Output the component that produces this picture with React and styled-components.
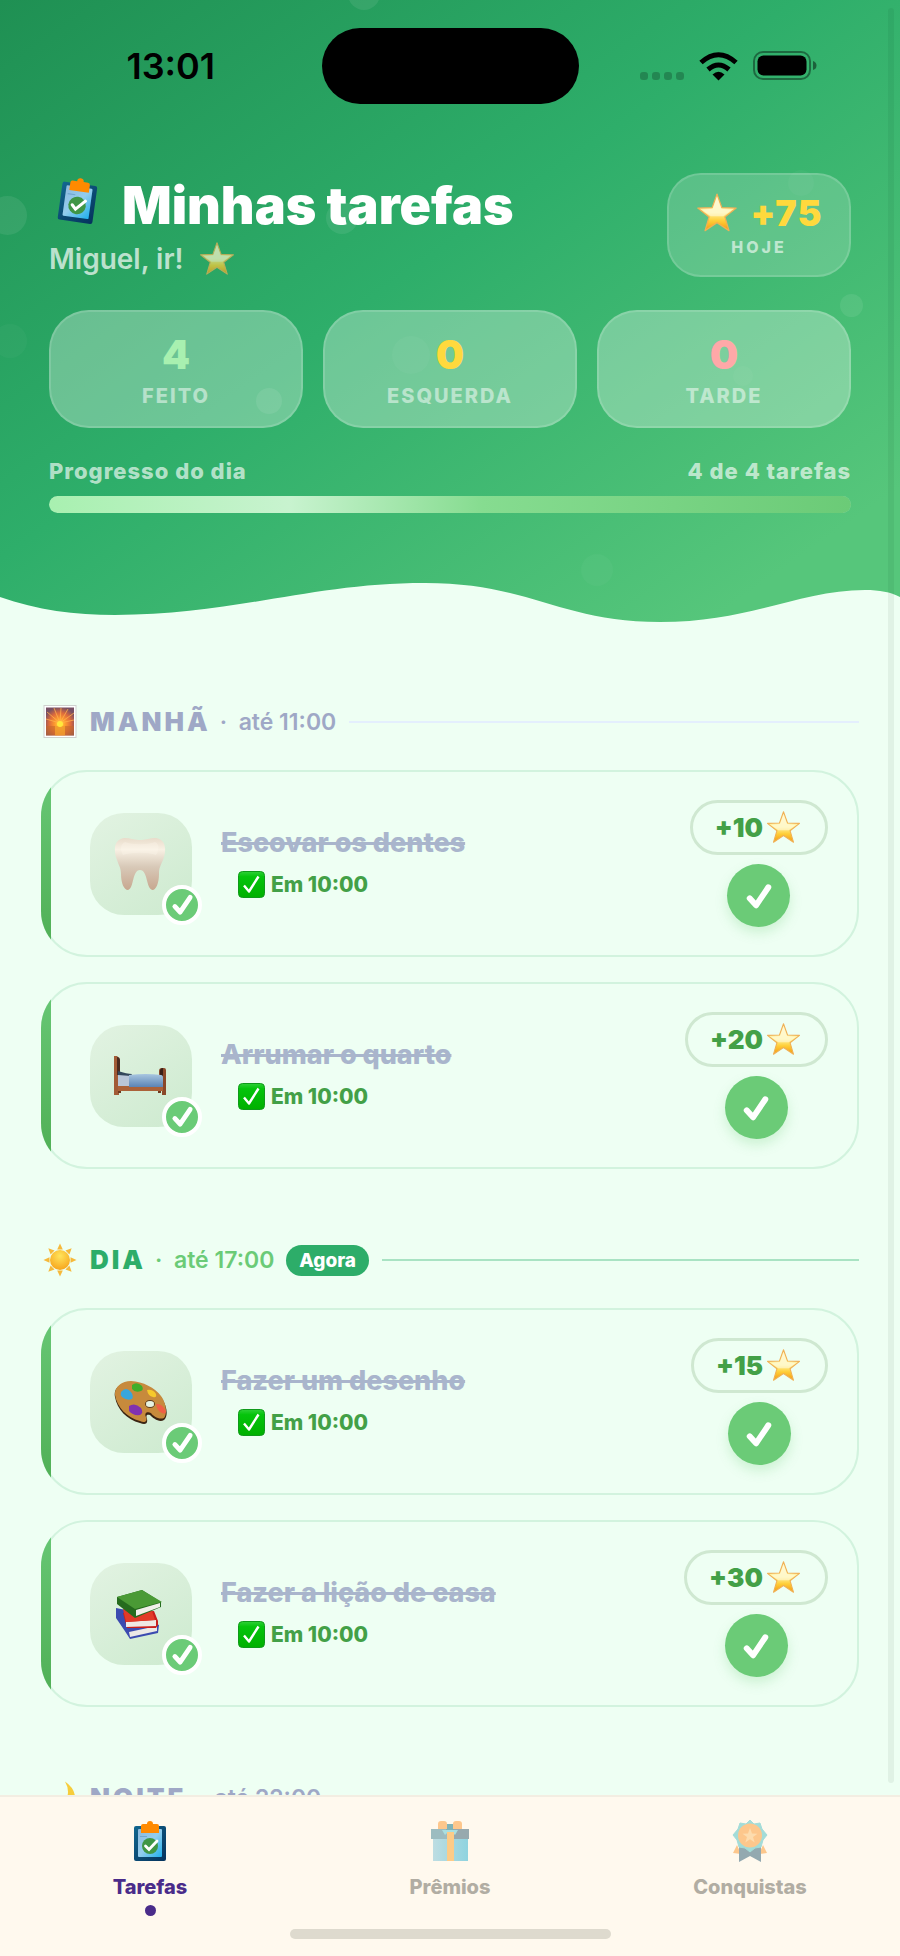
import React from "react";
import styled, { createGlobalStyle, css } from "styled-components";

const Colors = {
  page:      "#eefff3",
  green:     "#2dad69",
  leaf:      "#6bcb77",
  darkLeaf:  "#43a047",
  muted:     "#9fa8c6",
  done:      "#a9b5cc",
  cream:     "#fff9ee",
  purple:    "#4a2c8a",
  yellow:    "#ffd93d",
  mint:      "#a8f0b0",
  pink:      "#ffa8a8"
};

const GlobalStyle = createGlobalStyle`
  * { box-sizing: border-box; }
  body {
    margin: 0;
    background: ${Colors.page};
    font-family: Inter, "Liberation Sans", sans-serif;
  }
  button {
    border: 0;
    padding: 0;
    background: none;
    font: inherit;
    cursor: pointer;
  }
  svg { display: block; flex: none; }
`;

/* ---------- icons ---------- */

const StarIcon = ({ size, opacity = 1 }) =>
  <svg width={size} height={size} viewBox="0 0 40 40" opacity={opacity} aria-hidden="true">
    <defs>
      <linearGradient id="starFill" x1="0" y1="0" x2="0" y2="1">
        <stop offset="0" stopColor="#fff3bd" />
        <stop offset="0.5" stopColor="#fff3a0" />
        <stop offset="0.72" stopColor="#ffcf3a" />
        <stop offset="1" stopColor="#f59a0c" />
      </linearGradient>
    </defs>
    <path
      d="M20 2 L24.600 14.900 L38.300 15.300 L27.500 23.700 L31.400 36.800 L20 29.200 L8.600 36.800 L12.500 23.700 L1.700 15.300 L15.400 14.900 Z"
      fill="url(#starFill)" stroke="#f0b055" strokeWidth="1.2" strokeLinejoin="round" />
    <path d="M20 5 L24 16 L34 17 L26 23 L14 23 L6 17 L16 16 Z" fill="#fffdf0" opacity="0.5" />
  </svg>

const CheckIcon = ({ size, width = 4 }) =>
  <svg width={size} height={size} viewBox="0 0 24 24" aria-hidden="true">
    <path d="M4 14 L9.500 20 L20 4.500" fill="none" stroke="#fff"
      strokeWidth={width} strokeLinecap="round" strokeLinejoin="round" />
  </svg>

const ClipboardIcon = ({ size }) =>
  <svg width={size} height={size} viewBox="0 0 42 42" aria-hidden="true">
    <defs>
      <linearGradient id="board" x1="0" y1="0" x2="1" y2="1">
        <stop offset="0" stopColor="#12678f" />
        <stop offset="1" stopColor="#05325c" />
      </linearGradient>
      <linearGradient id="sheet" x1="0" y1="0" x2="1" y2="1">
        <stop offset="0" stopColor="#8fb9dd" />
        <stop offset="0.5" stopColor="#92cdee" />
        <stop offset="1" stopColor="#1eb0ec" />
      </linearGradient>
    </defs>
    <rect x="5" y="6" width="32" height="35" rx="2" fill="url(#board)" />
    <rect x="9" y="9" width="24" height="28" rx="1" fill="url(#sheet)" />
    <path d="M11 16.500 H18" stroke="#6fa6cf" strokeWidth="1" />
    <path d="M12 13 V6 Q12 4 14 4 H18 Q18 1 21 1 Q24 1 24 4 H28 Q30 4 30 6 V13 Z" fill="#ff8a00" />
    <circle cx="21" cy="26" r="8" fill="#3f9646" />
    <path d="M16.500 26 L20 29.500 L28 21" fill="none" stroke="#fff" strokeWidth="2.800" strokeLinecap="round" />
  </svg>

const SunriseIcon = () =>
  <svg width="34" height="34" viewBox="0 0 34 34" aria-hidden="true">
    <defs>
      <radialGradient id="dawn" cx="0.5" cy="0.58" r="0.6">
        <stop offset="0" stopColor="#ffe14a" />
        <stop offset="0.3" stopColor="#ff9d2e" />
        <stop offset="0.65" stopColor="#dd6a3c" />
        <stop offset="1" stopColor="#775063" />
      </radialGradient>
    </defs>
    <rect x="1" y="0.5" width="32" height="32" fill="#fff" stroke="#cfd2cf" />
    <rect x="3" y="2.500" width="28" height="28" fill="url(#dawn)" />
    <path d="M3 21 H31 V30.500 H3 Z" fill="#c8692a" opacity="0.6" />
    <path d="M12 21 H22 V30.500 H12 Z" fill="#ffb02e" opacity="0.6" />
    <path d="M17 18 L4 7 M17 18 L11 3 M17 18 L18 3 M17 18 L25 4 M17 18 L31 8 M17 18 L3 14 M17 18 L31 15"
      stroke="#ffb04a" strokeWidth="0.800" />
    <circle cx="17" cy="19" r="3" fill="#ffe83d" />
  </svg>

const SunIcon = () =>
  <svg width="34" height="34" viewBox="0 0 34 34" aria-hidden="true">
    <defs>
      <radialGradient id="sun" cx="0.5" cy="0.3" r="0.7">
        <stop offset="0" stopColor="#ffe45c" />
        <stop offset="1" stopColor="#f7a51c" />
      </radialGradient>
    </defs>
    {[0, 45, 90, 135, 180, 225, 270, 315].map(a =>
      <path key={a} d="M17 0.500 L19.800 6.500 H14.200 Z" fill="#f6b93b" transform={`rotate(${a} 17 17)`} />
    )}
    <circle cx="17" cy="17" r="10" fill="url(#sun)" />
  </svg>

const MoonIcon = () =>
  <svg width="34" height="34" viewBox="0 0 34 34" aria-hidden="true">
    <path d="M22 0.500 Q33 8 32 19 Q29 33 14 33 Q5 32 2 25 Q14 29 22 20 Q28 11 22 0.500 Z" fill="#f6cd3c" />
  </svg>

const TickBoxIcon = () =>
  <svg width="27" height="27" viewBox="0 0 27 27" aria-hidden="true">
    <defs>
      <linearGradient id="tickBox" x1="0" y1="0" x2="0" y2="1">
        <stop offset="0" stopColor="#2fd038" />
        <stop offset="0.2" stopColor="#05c40c" />
        <stop offset="1" stopColor="#00b000" />
      </linearGradient>
    </defs>
    <rect x="0.500" y="0.500" width="26" height="26" rx="4" fill="url(#tickBox)" stroke="#0f9a1a" />
    <path d="M6 14.500 L11 20.500 L20.500 5.500" fill="none" stroke="#fff" strokeWidth="2.400" strokeLinejoin="round" />
  </svg>

const ToothIcon = () =>
  <svg width="52" height="54" viewBox="1 0 52 54" aria-hidden="true">
    <defs>
      <linearGradient id="tooth" x1="0" y1="0" x2="0" y2="1">
        <stop offset="0" stopColor="#e9dccb" />
        <stop offset="0.22" stopColor="#f8f1e4" />
        <stop offset="0.55" stopColor="#d8c9b8" />
        <stop offset="1" stopColor="#c7a78f" />
      </linearGradient>
    </defs>
    <path
      d="M9 1.500 C16 0 20 3.500 27 3 C34 3.500 38 0 45 1.500 C54 4 53 16 50 23 C47 30 46 31 46 37 C46 46 43 53 39.500 53 C33 52 35 33 27 33 C19 33 21 52 15 53 C11 53 8 46 8 37 C8 31 6 29 4 23 C1 16 0 4 9 1.500 Z"
      fill="url(#tooth)" />
    <path d="M12 5 C20 8 34 8 42 5 C47 7 46 14 43 18 C34 15 20 15 10 18 C7 13 7 7 12 5 Z" fill="#fffaf0" opacity="0.3" />
  </svg>

const BedIcon = () =>
  <svg width="54" height="54" viewBox="0 0 54 54" aria-hidden="true">
    <defs>
      <linearGradient id="blanket" x1="0" y1="0" x2="0" y2="1">
        <stop offset="0" stopColor="#a8c6e0" />
        <stop offset="1" stopColor="#5b84b5" />
      </linearGradient>
    </defs>
    <path d="M1 7 L4 7 Q6 8 6 11 V46 H1 Z" fill="#a25b36" />
    <path d="M4 8 Q7 8 7 11 V26 L4 26 Z" fill="#4b2a1f" />
    <path d="M46 22 Q46 19 49 19 H51 Q53 19 53 21 V46 H49 V26 H46 Z" fill="#8a4829" />
    <path d="M47 22 Q47 19 50 19 V27 H47 Z" fill="#3a2018" />
    <rect x="5" y="36" width="45" height="6" fill="#ab6239" />
    <path d="M5 26 L18 26 L18 37 L5 37 Z" fill="#b9c6d8" />
    <path d="M5 22 Q14 25 19 25 L18 27 L5 26 Z" fill="#34485c" />
    <path d="M16 26 Q33 24 48 26 Q50 26 50 29 V38 H16 Z" fill="url(#blanket)" />
    <path d="M5 42 H8 V44 H5 Z M45 42 H48 V44 H45 Z" fill="#6d3a20" />
  </svg>

const PaletteIcon = () =>
  <svg width="54" height="54" viewBox="0 -2 54 54" aria-hidden="true">
    <path
      d="M2 20 C0 11 8 5 18 5.500 C30 6 42 12 48 20 C55 30 55 40 51 43 C46 46 40 41 37 38 C33 37 33 39 34 42 C35 47 32 48 27 46 C14 43 4 32 2 20 Z"
      fill="#3b2413" />
    <path
      d="M2 18 C1 10 9 4 18 4 C30 4.500 42 11 48 19 C54 27 54 38 51 41 C46 43 40 39 38 36 C34 34 31 36 33 40 C35 45 31 46 27 44 C14 41 4 30 2 18 Z"
      fill="#c78a3c" />
    <ellipse cx="37" cy="27" rx="4.500" ry="3.500" fill="#e6f2e2" stroke="#5e3a18" strokeWidth="1" />
    <path d="M8 15 Q13 9 18 15 Q21 19 19 22 Q14 24 9 20 Q7 18 8 15 Z" fill="#3aa6dc" />
    <path d="M19 8 Q24 4 29 9 Q31 13 28 14 Q22 16 19 12 Z" fill="#3fae2a" />
    <path d="M34 13 Q40 12 43 17 Q44 21 40 20 Q35 19 34 13 Z" fill="#f6c92c" />
    <path d="M43 27 Q49 26 53 34 Q53 38 49 36 Q44 34 43 27 Z" fill="#ef5f45" />
    <path d="M16 29 Q22 25 28 31 Q31 36 27 38 Q20 39 16 34 Z" fill="#8131b0" />
  </svg>

const BooksIcon = () =>
  <svg width="54" height="54" viewBox="1 0 54 54" aria-hidden="true">
    <path d="M4 21 L14 23 L47 38 L46 46 L18 52 Q13 44 4 31 Z" fill="#3b4bb0" />
    <path d="M17 45 L45 39 V44 L18 50 Z" fill="#ece9e6" />
    <path d="M11 26 L42 24 L46 34 L46 38 L44 41 L15 41 Z" fill="#c81f1d" />
    <path d="M14 35 L44 33 V39 L14 40 Z" fill="#efe9e4" />
    <path d="M11 22 L40 24 L43 33 L14 35 Z" fill="#e23a28" />
    <path d="M5 10 L30 3 L49 15 L49 20 L23 31 L5 17 Z" fill="#256b1e" />
    <path d="M24 23 L48 16 V20 L24 29 Z" fill="#f2f0ea" />
    <path d="M5 10 L30 3 L50 15 L23 22 Z" fill="#4a9a35" />
  </svg>

const GiftIcon = () =>
  <svg width="42" height="42" viewBox="0 0 42 42" aria-hidden="true">
    <defs>
      <linearGradient id="gift" x1="0" y1="0" x2="1" y2="0">
        <stop offset="0" stopColor="#bedde2" />
        <stop offset="1" stopColor="#8fd3df" />
      </linearGradient>
    </defs>
    <rect x="4" y="19" width="35" height="22" fill="url(#gift)" />
    <rect x="2" y="9" width="38" height="10" fill="#97a9ae" />
    <rect x="2" y="9" width="19" height="10" fill="#9cbcc0" />
    <rect x="17" y="4" width="8" height="7" fill="#7fb3b8" />
    <path d="M9 9 V4 Q9 1 12 1 H15 Q18 1 18 4 V9 Z M33 9 V4 Q33 1 30 1 H27 Q24 1 24 4 V9 Z" fill="#fdc78c" />
    <path d="M13 10 H29 L26 15 L23 12 H19 L16 15 Z" fill="#a9dfe0" />
    <rect x="18" y="12" width="7" height="29" fill="#fdcb87" />
  </svg>

const MedalIcon = () =>
  <svg width="42" height="42" viewBox="0 0 42 42" aria-hidden="true">
    <path d="M8 25 L4 33 L12 34 Z M34 25 L38 33 L30 34 Z" fill="#fdc78c" />
    <path d="M10 27 H32 V42 L21 36 L10 42 Z" fill="#93a9b0" />
    <path
      d="M21 0 L25 4 L31 3 L33 9 L38 15 L34 20 L32 27 L26 28 L21 32 L16 28 L10 27 L8 20 L4 15 L9 9 L11 3 L17 4 Z"
      fill="#a3dcd8" stroke="#a3dcd8" strokeWidth="1" strokeLinejoin="round" />
    <circle cx="21" cy="15.500" r="12" fill="#fdc78c" />
    <path d="M21 8 L23 13.500 L28.500 13.700 L24 17 L25.700 22.500 L21 19.300 L16.300 22.500 L18 17 L13.500 13.700 L19 13.500 Z" fill="#fddcae" />
  </svg>

const WifiIcon = () =>
  <svg width="39" height="29" viewBox="0 0 39 29" aria-hidden="true">
    <path d="M19.500 28.500 L13.500 22.500 Q19.500 17 25.500 22.500 Z" fill="#000" />
    <path d="M9 17.500 Q19.500 8.500 30 17.500" fill="none" stroke="#000" strokeWidth="5" />
    <path d="M2 10.500 Q19.500 -5 37 10.500" fill="none" stroke="#000" strokeWidth="5" />
  </svg>

const BatteryIcon = () =>
  <svg width="64" height="30" viewBox="0 0 64 30" aria-hidden="true">
    <rect x="1" y="1" width="56" height="27" rx="9" fill="none" stroke="#000" strokeWidth="2" opacity="0.4" />
    <rect x="4.500" y="4.500" width="49" height="20" rx="6" fill="#000" />
    <path d="M60 10 Q63.500 11 63.500 14.500 Q63.500 18 60 19 Z" fill="#000" opacity="0.45" />
  </svg>

/* ---------- header ---------- */

const Screen = styled.div`
  position: relative;
  display: flex;
  flex-direction: column;
  height: 100vh;
  overflow: hidden;
`;

const ScrollArea = styled.div`
  flex: 1;
  min-height: 0;
  overflow: hidden;
`;

const ScrollThumb = styled.div`
  position: absolute;
  top: 8px;
  right: 6px;
  bottom: 173px;
  width: 6px;
  border-radius: 3px;
  background: rgba(0, 40, 20, 0.06);
`;

const Header = styled.header`
  position: relative;
  overflow: hidden;
  background: linear-gradient(145deg, #1f9053 0%, #2eae6a 44%, #56c67b 88%, #56c67b 100%);
`;

const Bubble = styled.span`
  position: absolute;
  left: ${p => p.$x}%;
  top: ${p => p.$y}px;
  width: ${p => p.$size}px;
  height: ${p => p.$size}px;
  border-radius: 50%;
  background: rgba(255, 255, 255, ${p => p.$faint ? 0.03 : 0.08});
`;

const StatusBar = styled.div`
  display: grid;
  grid-template-columns: 1fr 257px 1fr;
  align-items: center;
  padding: 28px 0;
`;

const Clock = styled.time`
  padding-left: 20px;
  text-align: center;
  font-size: 36px;
  line-height: 40px;
  font-weight: 600;
  color: #000;
`;

const Island = styled.div`
  height: 76px;
  border-radius: 38px;
  background: #000;
`;

const Signals = styled.div`
  display: flex;
  justify-content: center;
  align-items: flex-end;
  gap: 15px;
  padding-right: 22px;
`;

const SignalDots = styled.div`
  display: flex;
  gap: 4px;
  padding-bottom: 1px;
`;

const SignalDot = styled.i`
  width: 8px;
  height: 8px;
  border-radius: 3px;
  background: rgba(0, 0, 0, 0.22);
`;

const HeaderBody = styled.div`
  position: relative;
  padding: 41px 49px 67px;
`;

const HeadRow = styled.div`
  display: flex;
  justify-content: space-between;
  align-items: flex-start;
`;

const TitleRow = styled.div`
  display: flex;
  align-items: center;
  gap: 22px;
  height: 66px;
  padding-left: 5px;
`;

const Tilted = styled.span`
  transform: rotate(8deg);
  padding-bottom: 12px;
`;

const Title = styled.h1`
  margin: 0;
  font-size: 52px;
  line-height: 64px;
  font-weight: 900;
  color: #fff;
`;

const Greeting = styled.p`
  display: flex;
  align-items: center;
  gap: 15px;
  margin: 2px 0 0;
  font-size: 28px;
  line-height: 36px;
  font-weight: 600;
  color: rgba(255, 255, 255, 0.7);
`;

const glass = css`
  border: 2px solid rgba(255, 255, 255, 0.14);
  text-align: center;
`;

const TodayBadge = styled.div`
  ${glass}
  width: 184px;
  height: 104px;
  padding: 16px 0 0;
  border-radius: 34px;
  background: rgba(255, 255, 255, 0.18);
`;

const TodayPoints = styled.div`
  display: flex;
  justify-content: center;
  align-items: center;
  gap: 13px;
  font-size: 36px;
  line-height: 44px;
  font-weight: 900;
  letter-spacing: 1px;
  color: ${Colors.yellow};
`;

const TodayLabel = styled.div`
  font-size: 16px;
  line-height: 24px;
  font-weight: 800;
  letter-spacing: 3px;
  color: rgba(255, 255, 255, 0.6);
`;

const Stats = styled.div`
  display: grid;
  grid-template-columns: repeat(3, 1fr);
  gap: 20px;
  margin-top: 33px;
`;

const Stat = styled.div`
  ${glass}
  padding: 21px 0 18px;
  border-radius: 40px;
  background: rgba(255, 255, 255, 0.3);
`;

const StatValue = styled.div`
  font-size: 40px;
  line-height: 44px;
  font-weight: 900;
  color: ${p => p.$color};
`;

const StatLabel = styled.div`
  margin-top: 7px;
  font-size: 20px;
  line-height: 24px;
  font-weight: 800;
  letter-spacing: 2px;
  color: rgba(255, 255, 255, 0.5);
`;

const ProgressText = styled.div`
  display: flex;
  justify-content: space-between;
  margin-top: 29px;
  font-size: 22px;
  line-height: 28px;
  font-weight: 800;
  letter-spacing: 1px;
  color: rgba(255, 255, 255, 0.65);
`;

const Track = styled.div`
  height: 17px;
  margin-top: 11px;
  border-radius: 9px;
  background: rgba(255, 255, 255, 0.25);
  overflow: hidden;
`;

const TrackFill = styled.div`
  height: 100%;
  border-radius: 9px;
  background: linear-gradient(90deg, #a8f0b0 0%, #c8f3cf 30%, #86dc90 54%, #6bcb77 100%);
`;

const Wave = styled.svg`
  position: relative;
  width: 100%;
  height: 60px;
`;

/* ---------- tasks ---------- */

const Main = styled.main`
  display: flex;
  flex-direction: column;
  gap: 71px;
  padding: 62px 41px 80px;
`;

const SectionHead = styled.div`
  display: flex;
  align-items: center;
  height: 40px;
  margin-bottom: 28px;
  padding-left: 2px;
  color: ${p => p.$active ? Colors.leaf : Colors.muted};
`;

const SectionName = styled.h2`
  margin: 0 0 0 13px;
  font-size: 26px;
  line-height: 32px;
  font-weight: 900;
  letter-spacing: 3px;
  color: ${p => p.$active ? Colors.green : Colors.muted};
`;

const SectionTime = styled.span`
  margin-left: 9px;
  font-size: 23px;
  line-height: 32px;
  font-weight: 600;
  white-space: pre;
`;

const NowTag = styled.span`
  margin-left: 12px;
  padding: 0 13px;
  border-radius: 16px;
  background: ${Colors.green};
  color: #fff;
  font-size: 19px;
  line-height: 31px;
  font-weight: 800;
`;

const Rule = styled.span`
  flex: 1;
  height: 2px;
  margin-left: 13px;
  background: ${p => p.$active ? "#a9e3c3" : "#e4effd"};
`;

const TaskList = styled.div`
  display: flex;
  flex-direction: column;
  gap: 25px;
`;

const Card = styled.article`
  position: relative;
  display: flex;
  align-items: center;
  height: 187px;
  padding: 0 29px 0 47px;
  border: 2px solid #d2f3de;
  border-radius: 46px;

  &::before {
    content: "";
    position: absolute;
    inset: -2px;
    border-radius: 46px;
    background: linear-gradient(180deg, #68c876, #4fae54) left / 10px 100% no-repeat;
    pointer-events: none;
  }
`;

const Tile = styled.div`
  position: relative;
  display: flex;
  align-items: center;
  justify-content: center;
  width: 102px;
  height: 102px;
  flex: none;
  padding-right: 2px;
  border-radius: 34px;
  background: linear-gradient(145deg, #e2f3e2, #cdeacf);
`;

const TileCheck = styled.span`
  position: absolute;
  right: -10px;
  bottom: -10px;
  display: flex;
  align-items: center;
  justify-content: center;
  width: 40px;
  height: 40px;
  border: 4px solid #fff;
  border-radius: 50%;
  background: ${Colors.leaf};
`;

const TaskText = styled.div`
  flex: 1;
  min-width: 0;
  padding-left: 29px;
`;

const TaskName = styled.h3`
  margin: 0;
  font-size: 27px;
  line-height: 34px;
  font-weight: 800;
  color: ${Colors.done};
  text-decoration: line-through;
  text-decoration-thickness: 3px;
`;

const TaskDone = styled.div`
  display: flex;
  align-items: center;
  gap: 6px;
  margin: 8px 0 0 17px;
  font-size: 21px;
  line-height: 34px;
  font-weight: 800;
  color: ${Colors.darkLeaf};
`;

const TaskSide = styled.div`
  display: flex;
  flex-direction: column;
  align-items: center;
  gap: 9px;
`;

const Points = styled.div`
  display: flex;
  align-items: center;
  gap: 3px;
  height: 55px;
  padding: 0 24px 0 22px;
  border: 3px solid #cfe8d1;
  border-radius: 28px;
  font-size: 26px;
  font-weight: 900;
  color: ${Colors.darkLeaf};
`;

const DoneButton = styled.button`
  display: flex;
  align-items: center;
  justify-content: center;
  width: 63px;
  height: 63px;
  border-radius: 50%;
  background: ${Colors.leaf};
  box-shadow: 0 6px 12px rgba(107, 203, 119, 0.25);
`;

/* ---------- bottom navigation ---------- */

const BottomBar = styled.div`
  position: relative;
  flex: none;
  padding: 23px 0 17px;
  border-top: 2px solid #f3eee2;
  background: ${Colors.cream};
`;

const Tabs = styled.nav`
  display: grid;
  grid-template-columns: repeat(3, 1fr);
`;

const Tab = styled.button`
  display: flex;
  flex-direction: column;
  align-items: center;
  font-size: 20px;
  line-height: 24px;
  font-weight: 800;
  color: ${p => p.$active ? Colors.purple : "#b1ada3"};

  &::after {
    content: "";
    width: 11px;
    height: 11px;
    margin-top: 6px;
    border-radius: 50%;
    background: ${p => p.$active ? Colors.purple : "transparent"};
  }
`;

const TabLabel = styled.span`
  margin-top: 13px;
`;

const HomeIndicator = styled.div`
  width: 321px;
  height: 10px;
  margin: 13px auto 0;
  border-radius: 5px;
  background: #dedace;
`;

/* ---------- data ---------- */

const bubbles = [
  { x: 38.7, y: -22, size: 32 },
  { x: -1.3, y: 196, size: 39 },
  { x: 36.2, y: 202, size: 32 },
  { x: -0.8, y: 324, size: 34, faint: true },
  { x: 28.4, y: 388, size: 26 },
  { x: 43.5, y: 336, size: 38, faint: true },
  { x: 87.5, y: 170, size: 26, faint: true },
  { x: 93.3, y: 294, size: 23 },
  { x: 81.4, y: 366, size: 20, faint: true },
  { x: 64.6, y: 554, size: 32, faint: true }
];

const stats = [
  { value: 4, label: "FEITO",    color: Colors.mint },
  { value: 0, label: "ESQUERDA", color: Colors.yellow },
  { value: 0, label: "TARDE",    color: Colors.pink }
];

const sections = [
  {
    name: "MANHÃ", until: "até 11:00", icon: <SunriseIcon />,
    tasks: [
      { name: "Escovar os dentes", points: 10, icon: <ToothIcon /> },
      { name: "Arrumar o quarto",  points: 20, icon: <BedIcon /> }
    ]
  },
  {
    name: "DIA", until: "até 17:00", icon: <SunIcon />, active: true,
    tasks: [
      { name: "Fazer um desenho",      points: 15, icon: <PaletteIcon /> },
      { name: "Fazer a lição de casa", points: 30, icon: <BooksIcon /> }
    ]
  },
  { name: "NOITE", until: "até 22:00", icon: <MoonIcon />, tasks: [] }
];

const tabs = [
  { label: "Tarefas",    icon: <ClipboardIcon size={42} />, active: true },
  { label: "Prêmios",    icon: <GiftIcon /> },
  { label: "Conquistas", icon: <MedalIcon /> }
];

const Task = ({ name, points, icon }) =>
  <Card>
    <Tile>
      {icon}
      <TileCheck><CheckIcon size={23} width={5} /></TileCheck>
    </Tile>
    <TaskText>
      <TaskName>{name}</TaskName>
      <TaskDone><TickBoxIcon />Em 10:00</TaskDone>
    </TaskText>
    <TaskSide>
      <Points>+{points}<StarIcon size={35} /></Points>
      <DoneButton aria-label={name} aria-pressed="true">
        <CheckIcon size={28} width={5} />
      </DoneButton>
    </TaskSide>
  </Card>

const Section = ({ name, until, icon, active, tasks }) =>
  <section>
    <SectionHead $active={active}>
      {icon}
      <SectionName $active={active}>{name}</SectionName>
      <SectionTime>{"·  " + until}</SectionTime>
      {active ? <NowTag>Agora</NowTag> : null}
      <Rule $active={active} />
    </SectionHead>
    <TaskList>
      {tasks.map(t => <Task key={t.name} {...t} />)}
    </TaskList>
  </section>

const App = () => {
  const done = 4;
  const total = 4;

  return (
    <Screen>
      <GlobalStyle />
      <ScrollArea>
        <Header>
          {bubbles.map((b, i) =>
            <Bubble key={i} $x={b.x} $y={b.y} $size={b.size} $faint={b.faint} />
          )}
          <StatusBar>
            <Clock>13:01</Clock>
            <Island />
            <Signals>
              <SignalDots>
                <SignalDot /><SignalDot /><SignalDot /><SignalDot />
              </SignalDots>
              <WifiIcon />
              <BatteryIcon />
            </Signals>
          </StatusBar>
          <HeaderBody>
            <HeadRow>
              <div>
                <TitleRow>
                  <Tilted><ClipboardIcon size={46} /></Tilted>
                  <Title>Minhas tarefas</Title>
                </TitleRow>
                <Greeting>Miguel, ir!<StarIcon size={36} opacity={0.7} /></Greeting>
              </div>
              <TodayBadge>
                <TodayPoints><StarIcon size={42} />+75</TodayPoints>
                <TodayLabel>HOJE</TodayLabel>
              </TodayBadge>
            </HeadRow>
            <Stats>
              {stats.map(s =>
                <Stat key={s.label}>
                  <StatValue $color={s.color}>{s.value}</StatValue>
                  <StatLabel>{s.label}</StatLabel>
                </Stat>
              )}
            </Stats>
            <ProgressText>
              <span>Progresso do dia</span>
              <span>{done} de {total} tarefas</span>
            </ProgressText>
            <Track role="progressbar" aria-valuenow={done} aria-valuemax={total}>
              <TrackFill style={{ width: `${done / total * 100}%` }} />
            </Track>
          </HeaderBody>
          <Wave viewBox="0 0 900 60" preserveAspectRatio="none" aria-hidden="true">
            <path
              d="M0 17 C37 30 75 35 115 35 C235 35 310 3 425 3 C530 3 560 42 660 42 C750 42 800 10 865 10 C880 10 890 12 900 17 V60 H0 Z"
              fill={Colors.page} />
          </Wave>
        </Header>
        <Main>
          {sections.map(s => <Section key={s.name} {...s} />)}
        </Main>
      </ScrollArea>
      <ScrollThumb />
      <BottomBar>
        <Tabs>
          {tabs.map(t =>
            <Tab key={t.label} $active={t.active}>
              {t.icon}
              <TabLabel>{t.label}</TabLabel>
            </Tab>
          )}
        </Tabs>
        <HomeIndicator />
      </BottomBar>
    </Screen>
  );
}

export default App;
